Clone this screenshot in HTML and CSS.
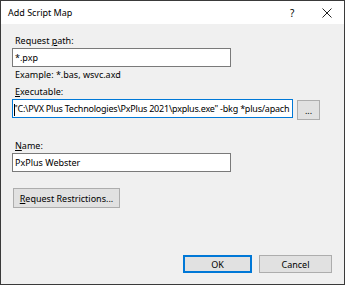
FILE: index.html
```html
<!DOCTYPE html>
<html lang="en">
<head>
    <meta charset="UTF-8">
    <title>Add Script Map</title>
    <link rel="stylesheet" href="styles.css">
</head>
<body>
    <div class="dialog">
        <div class="titlebar">
            <span class="title">Add Script Map</span>
            <span class="help">?</span>
            <span class="close">
                <svg width="10" height="10" viewBox="0 0 10 10"><path d="M0.5 0.5 L9.5 9.5 M9.5 0.5 L0.5 9.5" stroke="#222" stroke-width="1" fill="none"/></svg>
            </span>
        </div>
        <div class="content">
            <label class="lbl first">Request <u>p</u>ath:</label>
            <div class="field short">*.pxp</div>
            <div class="hint">Example: *.bas, wsvc.axd</div>
            <label class="lbl"><u>E</u>xecutable:</label>
            <div class="row">
                <div class="field wide focused"><span class="caret"></span>"C:\PVX Plus Technologies\PxPlus 2021\pxplus.exe" -bkg *plus/apach</div>
                <div class="btn browse">...</div>
            </div>
            <label class="lbl name"><u>N</u>ame:</label>
            <div class="field short">PxPlus Webster</div>
            <div class="btn restrict"><u>R</u>equest Restrictions...</div>
            <div class="footer">
                <div class="btn ok">OK</div>
                <div class="btn cancel">Cancel</div>
            </div>
        </div>
    </div>
</body>
</html>
```

FILE: styles.css
```css
body { margin: 0; font-family: "Noto Sans", "Open Sans", sans-serif; font-size: 9px; color: #000; }
.dialog { width: 345px; height: 285px; box-sizing: border-box; border: 1px solid #3a3a3a; background: #f0f0f0; display: flex; flex-direction: column; }
.titlebar { height: 23px; background: #fff; display: flex; align-items: center; padding-left: 7px; }
.title { font-size: 9px; flex: 1; }
.help { font-size: 10px; width: 32px; }
.close { width: 22px; display: flex; align-items: center; }
.content { flex: 1; display: flex; flex-direction: column; align-items: flex-start; padding: 10px 12px 11px 11px; }
.lbl { display: block; height: 14px; line-height: 14px; padding-left: 3px; }
.lbl.name { margin-top: 19px; }
.hint { height: 14px; line-height: 14px; margin-top: 1px; margin-bottom: 3px; padding-left: 3px; }
.field { box-sizing: border-box; height: 19px; line-height: 17px; border: 1px solid #7a7a7a; background: #fff; padding-left: 2px; white-space: nowrap; overflow: hidden; }
.field.short { width: 219px; }
.field.wide { width: 281px; padding-left: 1px; letter-spacing: -0.22px; }
.field.focused { border-color: #0078d7; }
.caret { display: inline-block; width: 1px; height: 12px; background: #000; vertical-align: middle; margin-right: -1px; }
.row { display: flex; gap: 4px; align-items: flex-start; }
.btn { box-sizing: border-box; background: #e1e1e1; border: 1px solid #adadad; display: flex; align-items: center; justify-content: center; }
.browse { width: 23px; height: 20px; margin-top: 1px; }
.restrict { width: 107px; height: 20px; margin-top: 16px; margin-left: 1px; }
.footer { margin-top: auto; align-self: stretch; display: flex; justify-content: flex-end; gap: 7px; }
.ok { width: 69px; height: 18px; border: 2px solid #0078d7; }
.cancel { width: 73px; height: 18px; }
```
